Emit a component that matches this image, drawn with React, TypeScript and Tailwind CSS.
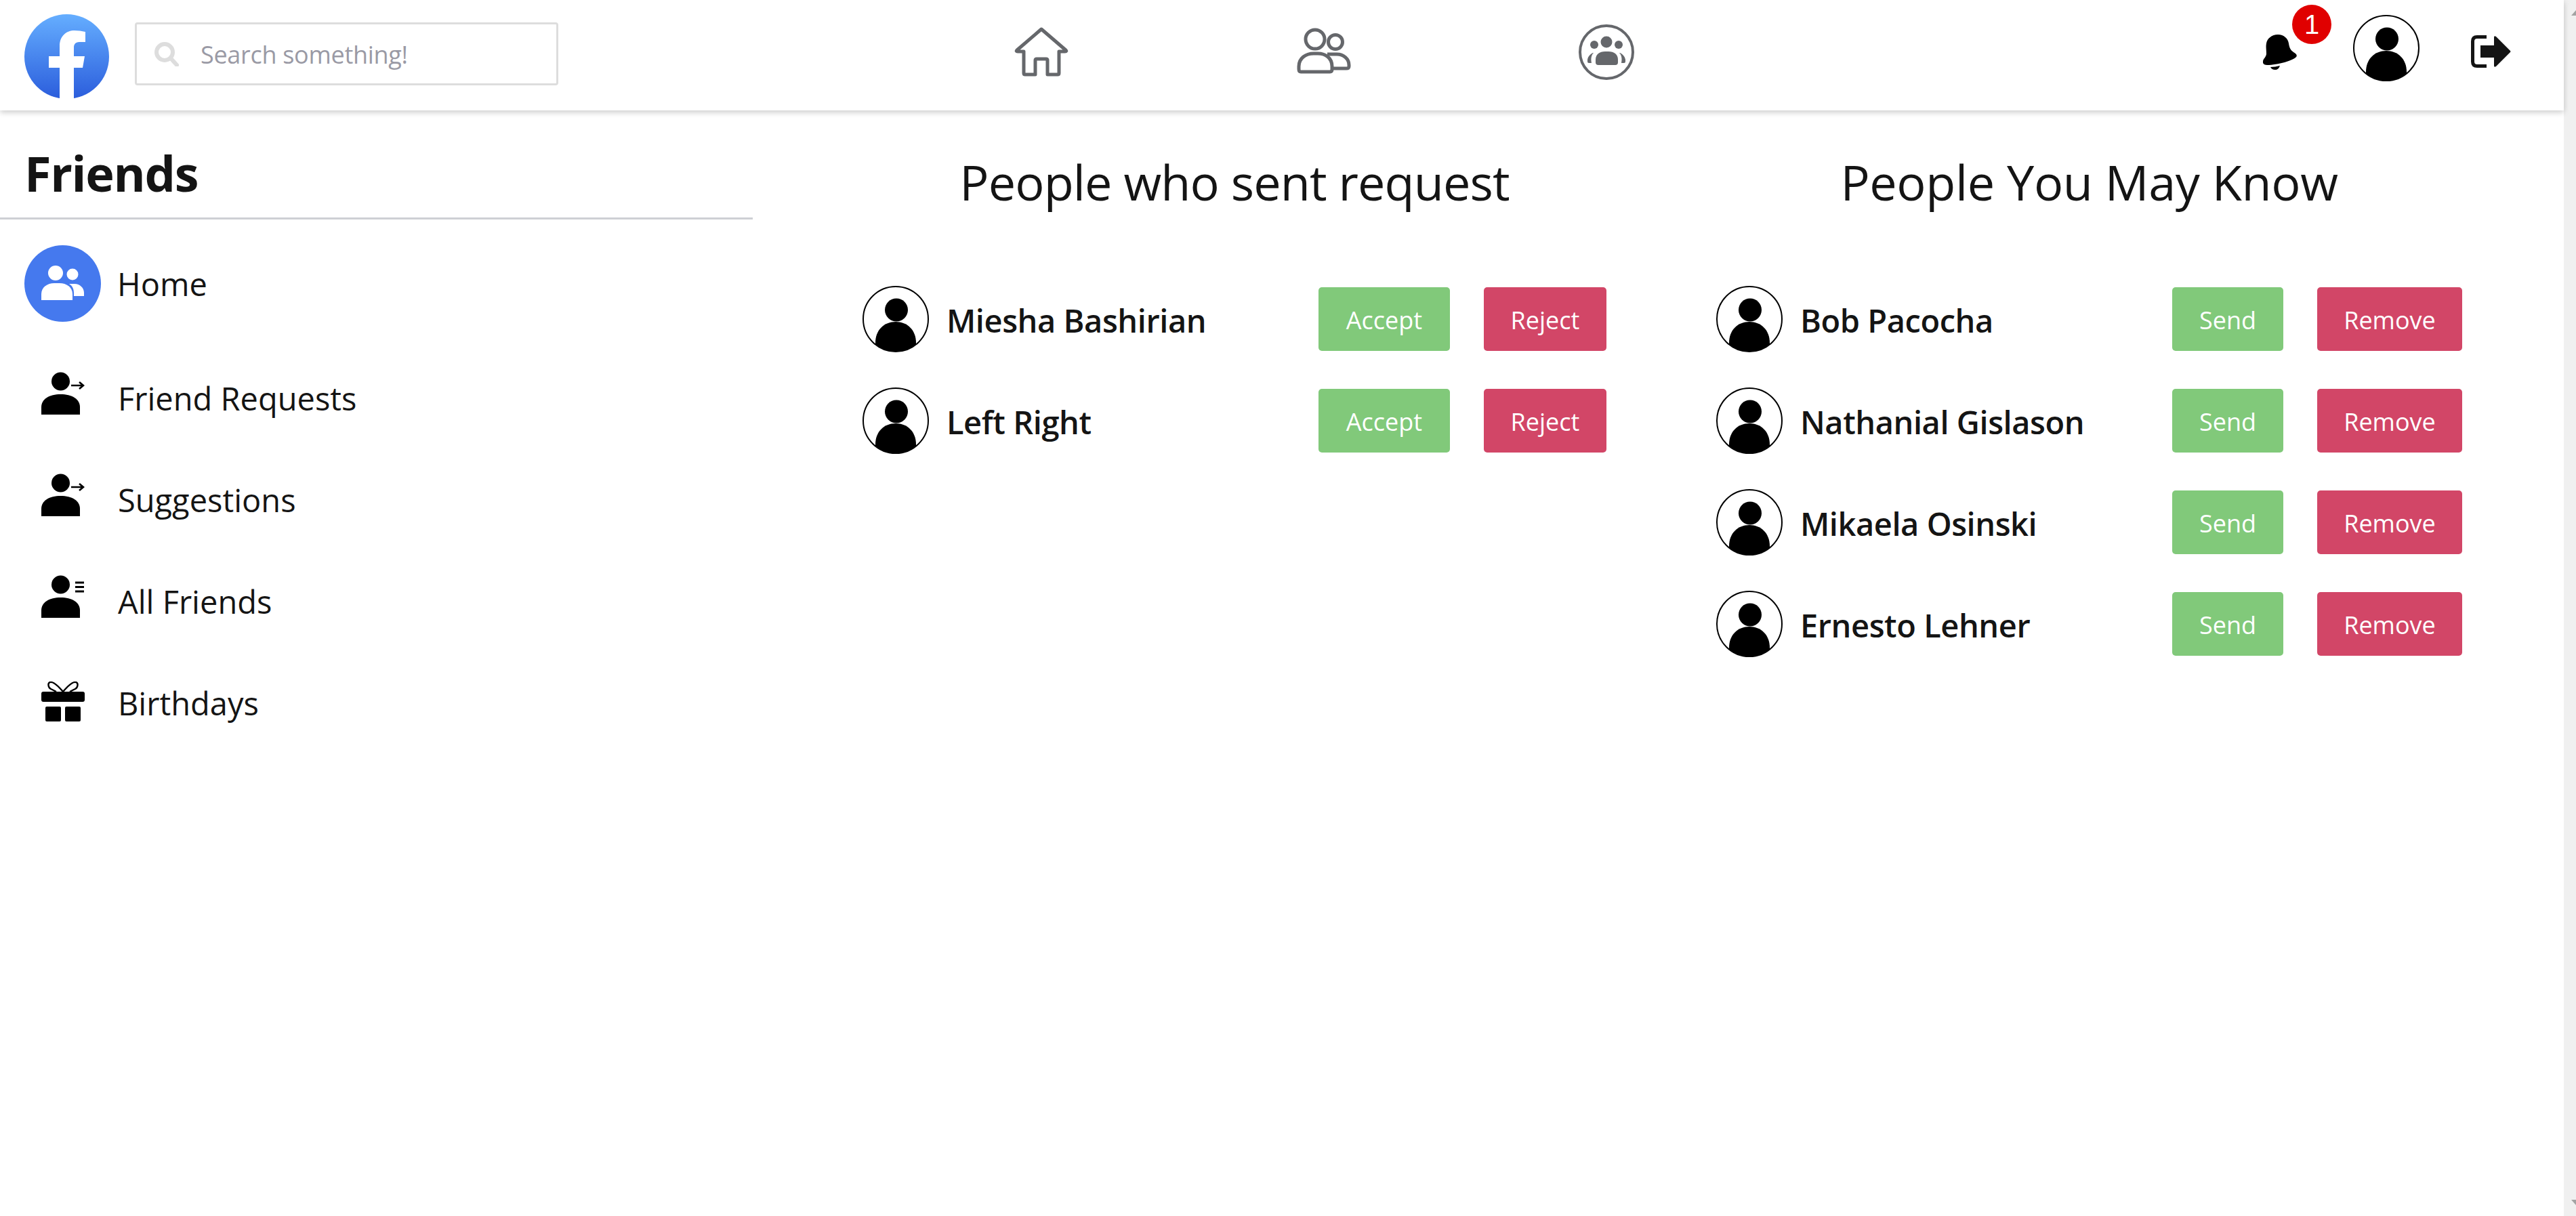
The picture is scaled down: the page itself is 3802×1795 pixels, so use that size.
import React from 'react';

const requests = ['Miesha Bashirian', 'Left Right'];
const suggestions = ['Bob Pacocha', 'Nathanial Gislason', 'Mikaela Osinski', 'Ernesto Lehner'];

function Logo() {
  return (
    <svg width="125" height="125" viewBox="16 11 125 125" className="mt-[21px] shrink-0">
      <defs>
        <linearGradient id="fb-blue" x1="0" y1="0" x2="0" y2="1">
          <stop offset="0" stopColor="#65aeff" />
          <stop offset="1" stopColor="#2b5ddc" />
        </linearGradient>
      </defs>
      <circle cx="78.5" cy="73.5" r="62.5" fill="url(#fb-blue)" />
      <path
        d="M68 137V90H52V73H68V58C68 43 78 35 90 35Q98 35 106 37V52H97C91 52 89 56 89 60V73H105L102 90H89V137Z"
        fill="#fff"
      />
    </svg>
  );
}

function SearchIcon() {
  return (
    <svg width="36" height="36" viewBox="0 0 36 36" fill="none" stroke="#dddddd" strokeWidth="6" className="shrink-0">
      <ellipse cx="15" cy="15" rx="12" ry="12" />
      <path d="M24 24L33 34" strokeLinecap="round" />
    </svg>
  );
}

function HomeIcon() {
  return (
    <svg width="110" height="95" viewBox="0 0 110 95" fill="none" stroke="#65676b" strokeWidth="5" strokeLinejoin="round" className="mr-[4px]">
      <path d="M57 13L21 44Q19 46 22 46H31V78Q31 80 33 80H48V59Q48 57 50 57H64Q66 57 66 59V80H81Q83 80 83 78V46H92Q95 46 93 44Z" />
    </svg>
  );
}

function FriendsIcon() {
  return (
    <svg width="110" height="95" viewBox="0 0 110 95" fill="none" stroke="#65676b" strokeWidth="5">
      <circle cx="42" cy="28" r="14" />
      <circle cx="72" cy="32" r="10.5" />
      <path d="M21 76Q18 76 18 72V68C18 56 28 49 40 49H46C58 49 67 56 67 68V72Q67 76 64 76Z" />
      <path d="M60 50H74C84 50 92 57 92 66V68Q92 71 88 71H67" />
    </svg>
  );
}

function GroupsIcon() {
  return (
    <svg width="100" height="95" viewBox="0 0 100 95" fill="#65676b">
      <circle cx="50" cy="47" r="39" fill="none" stroke="#65676b" strokeWidth="4" />
      <circle cx="50" cy="32" r="8.5" />
      <circle cx="32" cy="36" r="6" />
      <circle cx="68" cy="36" r="6" />
      <path d="M34 62V58C34 50 40 46 48 46H53C61 46 67 50 67 58V62Q67 66 63 66H38Q34 66 34 62Z" />
      <path d="M30 48C26 50 23 53 22 58V61Q22 63 24 63H28C27 58 27 52 31 48Z" />
      <path d="M70 48C74 50 77 53 78 58V61Q78 63 76 63H72C73 58 73 52 69 48Z" />
    </svg>
  );
}

function Bell() {
  return (
    <svg width="50" height="52" viewBox="0 0 50 52" fill="#000" className="mt-[51px]">
      <path d="M22 0C31 0 37 6 38 13C39 20 41 23 45 26C49 28 51 31 49 33C45 38 22 45 6 45C2 45 -1 43 0 39C1 35 5 33 5 28C5 22 4 18 5 13C6 6 13 0 22 0Z" />
      <path d="M11 48Q18 48 25 46Q23 52 18 52Q13 52 11 48Z" />
    </svg>
  );
}

function Avatar({ className }: { className?: string }) {
  return (
    <svg width="98" height="98" viewBox="0 0 98 98" className={`shrink-0 ${className ?? ''}`}>
      <circle cx="49" cy="49" r="48" fill="#fff" stroke="#000" strokeWidth="2" />
      <ellipse cx="50" cy="35.5" rx="17" ry="17" />
      <path d="M19 86.5V84C19 65 32 53 49 53C66 53 79 65 79 84V86.5A48 48 0 0 1 19 86.5Z" />
    </svg>
  );
}

function Logout() {
  return (
    <svg width="59" height="48" viewBox="0 0 59 48" className="mt-[52px]">
      <path d="M23 2.5H9Q2.5 2.5 2.5 9V39Q2.5 45.5 9 45.5H23" fill="none" stroke="#141414" strokeWidth="5" />
      <path d="M14 15H34V3Q34 0 37 2L58 23Q59 24 58 25L37 46Q34 48 34 45V33H14Z" fill="#141414" />
    </svg>
  );
}

function HomeBadge() {
  return (
    <div className="w-[113px] h-[113px] rounded-full bg-[#4579ee] shrink-0">
      <svg width="113" height="113" viewBox="0 0 113 113" fill="#fff">
        <circle cx="46" cy="41" r="11" />
        <circle cx="71" cy="43" r="8.5" />
        <path d="M25 81V72C25 62 34 56 44 56H52C62 56 71 62 71 72V81Z" />
        <path d="M66 57H74C82 57 88 63 88 70V75H73V70C73 65 71 60 66 57Z" />
      </svg>
    </div>
  );
}

function PersonIcon({ mark }: { mark: 'arrow' | 'list' }) {
  return (
    <svg width="64" height="64" viewBox="0 0 64 64" className="shrink-0 mb-[19px]">
      <circle cx="28.5" cy="14" r="13.5" />
      <path d="M0 63V52C0 40 12 33 28.5 33C45 33 57 40 57 52V63Z" />
      {mark === 'arrow' ? (
        <path d="M44 20H62M56 15L62 20L56 25" fill="none" stroke="#000" strokeWidth="2.6" />
      ) : (
        <path d="M50 11H63M50 17.5H63M50 24H63" fill="none" stroke="#000" strokeWidth="3" />
      )}
    </svg>
  );
}

function GiftIcon() {
  return (
    <svg width="64" height="59" viewBox="0 0 64 59" className="shrink-0 mb-[10px]">
      <path
        d="M32 15C26 8 18 0 13 1C9 2 10 9 14 11L22 15M32 15C38 8 46 0 51 1C55 2 54 9 50 11L42 15"
        fill="none"
        stroke="#000"
        strokeWidth="2.4"
      />
      <rect x="0" y="15" width="64" height="15" rx="3" />
      <rect x="6" y="37" width="23" height="22" rx="2" />
      <rect x="35" y="37" width="23" height="22" rx="2" />
    </svg>
  );
}

function NavRow({ icon, label }: { icon: React.ReactNode; label: string }) {
  return (
    <div className="flex items-center h-[150px] pl-[61px] gap-[49px]">
      {icon}
      <span className="mb-[4px] text-[47px] text-[#141414]">{label}</span>
    </div>
  );
}

function PersonRow({ name, yes, no }: { name: string; yes: string; no: string }) {
  const yesWidth = yes === 'Accept' ? 'w-[194px]' : 'w-[164px]';
  const noWidth = no === 'Reject' ? 'w-[181px]' : 'w-[214px]';
  return (
    <div className="flex items-center h-[98px]">
      <Avatar />
      <span className="w-[549px] ml-[26px] pt-[4px] text-[47px] tracking-[-0.45px] font-[550] text-[#141414]">{name}</span>
      <button className={`${yesWidth} h-[94px] pt-[3px] rounded-[5px] bg-[#81c97a] text-white text-[36px]`}>{yes}</button>
      <button className={`${noWidth} h-[94px] ml-[50px] pt-[3px] rounded-[5px] bg-[#d24667] text-white text-[36px]`}>{no}</button>
    </div>
  );
}

export default function App() {
  return (
    <div className="flex h-screen bg-white font-['Open_Sans',sans-serif] overflow-hidden">
      <div className="flex-1 min-w-0">
        {/* Header */}
        <header className="relative flex items-start h-[163px] pl-[36px] pr-[78px] bg-white shadow-[0_3px_8px_rgba(0,0,0,0.2)]">
          <Logo />
          <div className="flex items-center w-[625px] h-[93px] mt-[33px] ml-[38px] pl-[26px] gap-[32px] border-[3px] border-[#dddddd] rounded-[4px]">
            <SearchIcon />
            <span className="pt-[3px] text-[36px] tracking-[-0.3px] text-[#9a9aa5]">Search something!</span>
          </div>
          <nav className="flex ml-[504px] mt-[30px]">
            <div className="flex justify-center w-[417px]"><HomeIcon /></div>
            <div className="flex justify-center w-[417px]"><FriendsIcon /></div>
            <div className="flex justify-center w-[417px]"><GroupsIcon /></div>
          </nav>
          <div className="flex items-start ml-auto">
            <div className="relative">
              <Bell />
              <span className="absolute left-[43px] top-[7px] flex items-center justify-center w-[58px] h-[58px] rounded-full bg-[#e00000] text-white text-[40px] font-['Liberation_Sans',sans-serif]">1</span>
            </div>
            <Avatar className="mt-[22px] ml-[83px]" />
            <div className="ml-[76px]"><Logout /></div>
          </div>
        </header>

        <div className="flex">
          {/* Sidebar */}
          <aside className="w-[1111px] shrink-0">
            <div className="h-[161px] pl-[36px] pt-[42px] border-b-[3px] border-[#ced0d4]">
              <h1 className="text-[72px] leading-[100px] tracking-[-1.3px] font-bold text-[#141414]">Friends</h1>
            </div>
            <div className="flex items-center h-[113px] mt-[38px] mb-[40px] pl-[36px] gap-[24px]">
              <HomeBadge />
              <span className="pt-[1px] text-[47px] text-[#141414]">Home</span>
            </div>
            <NavRow icon={<PersonIcon mark="arrow" />} label="Friend Requests" />
            <NavRow icon={<PersonIcon mark="arrow" />} label="Suggestions" />
            <NavRow icon={<PersonIcon mark="list" />} label="All Friends" />
            <NavRow icon={<GiftIcon />} label="Birthdays" />
          </aside>

          {/* Lists */}
          <main className="flex pl-[81px]">
            <section className="w-[1260px] flex flex-col items-center">
              <h2 className="h-[259px] pt-[55px] text-[72px] leading-[100px] tracking-[-0.9px] text-[#141414]">People who sent request</h2>
              <div className="flex flex-col gap-[52px]">
                {requests.map(name => (
                  <PersonRow key={name} name={name} yes="Accept" no="Reject" />
                ))}
              </div>
            </section>
            <section className="w-[1260px] pl-[3px] flex flex-col items-center">
              <h2 className="h-[259px] pt-[55px] text-[72px] leading-[100px] tracking-[-0.4px] text-[#141414]">People You May Know</h2>
              <div className="flex flex-col gap-[52px]">
                {suggestions.map(name => (
                  <PersonRow key={name} name={name} yes="Send" no="Remove" />
                ))}
              </div>
            </section>
          </main>
        </div>
      </div>

      {/* Scrollbar */}
      <div className="flex flex-col justify-between w-[18px] shrink-0 bg-[#f0f0f0] pt-[15px] pb-[16px]">
        <svg width="18" height="8" viewBox="0 0 18 8"><path d="M18 0L11 8H18Z" fill="#a3a3a3" /></svg>
        <svg width="18" height="8" viewBox="0 0 18 8"><path d="M11 0H18V8Z" fill="#a3a3a3" /></svg>
      </div>
    </div>
  );
}
